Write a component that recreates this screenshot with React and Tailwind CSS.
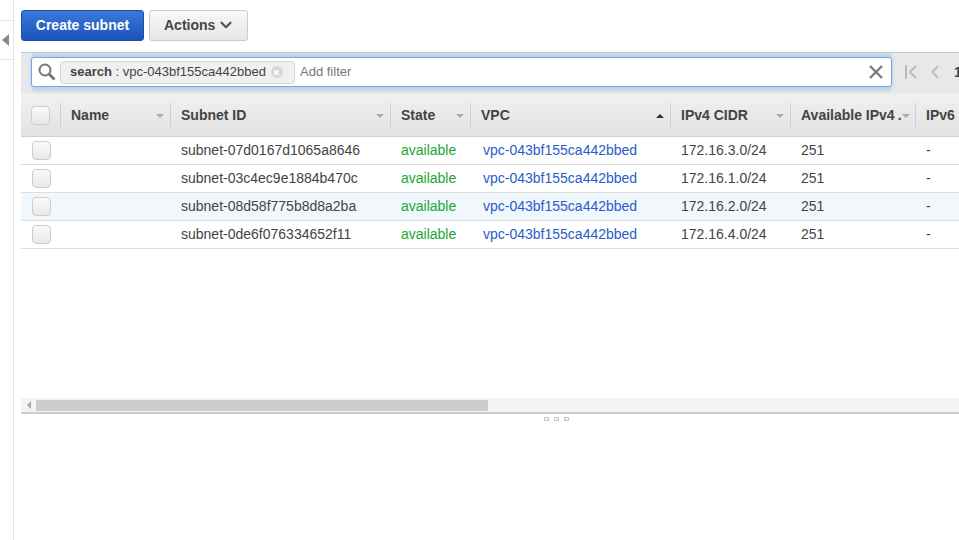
import { ChevronDown } from 'lucide-react';

const rows = [
  { id: 'subnet-07d0167d1065a8646', cidr: '172.16.3.0/24' },
  { id: 'subnet-03c4ec9e1884b470c', cidr: '172.16.1.0/24' },
  { id: 'subnet-08d58f775b8d8a2ba', cidr: '172.16.2.0/24', hover: true },
  { id: 'subnet-0de6f076334652f11', cidr: '172.16.4.0/24' },
];

function Arrow({ up }) {
  if (up) {
    return <span className="w-0 h-0 border-x-[4px] border-x-transparent border-b-[4px] border-b-[#333]" />;
  }
  return <span className="w-0 h-0 border-x-[4px] border-x-transparent border-t-[4px] border-t-[#aaa]" />;
}

function HeaderCell({ label, width, up, noArrow, dots }) {
  return (
    <div className={`${width} shrink-0 h-[26px] flex items-center justify-between pl-[10px] pr-[6px] border-l border-[#d0d0d0] overflow-hidden`}>
      <span className="font-bold text-[14px] text-[#444] whitespace-nowrap">
        {label}
        {dots && <span className="ml-[3px]">.</span>}
      </span>
      {!noArrow && <Arrow up={up} />}
    </div>
  );
}

function Checkbox() {
  return <div className="w-[19px] h-[19px] rounded-[4px] border border-[#ccc] bg-gradient-to-b from-[#fafafa] to-[#e8e8e8]" />;
}

function GripDot() {
  return <span className="w-[5px] h-[4px] border border-[#c4c4c4] bg-[#f6f6f6]" />;
}

export default function App() {
  return (
    <div className="w-[959px] h-[540px] overflow-hidden bg-white flex font-['Liberation_Sans',Arial,sans-serif]">
      {/* Collapsed side nav */}
      <div className="w-[14px] shrink-0 h-full border-r border-[#e6e6e6] pt-[20px]">
        <div className="h-[40px] border-y border-[#e6e6e6] flex items-center">
          <span className="w-0 h-0 border-y-[6px] border-y-transparent border-r-[7px] border-r-[#888] ml-[2px]" />
        </div>
      </div>

      <div className="flex-1 min-w-0 pl-[7px] flex flex-col">
        {/* Buttons */}
        <div className="h-[52px] pt-[10px] flex items-start gap-[5px]">
          <button className="w-[123px] h-[31px] rounded-[3px] border border-[#1a4fa8] bg-gradient-to-b from-[#3b78dc] to-[#1d52b8] text-white font-bold text-[14px]">
            Create subnet
          </button>
          <button className="w-[99px] h-[31px] rounded-[3px] border border-[#ccc] bg-gradient-to-b from-[#f8f8f8] to-[#e6e6e6] text-[#444] font-bold text-[14px] flex items-center pl-[14px] gap-[2px]">
            Actions
            <ChevronDown size={18} strokeWidth={3} className="text-[#555] -mt-[1px]" />
          </button>
        </div>

        {/* Filter bar */}
        <div className="h-[42px] shrink-0 w-[938px] overflow-hidden border-t border-[#c0c8d0] bg-[#e8e8e8] flex items-start pl-[10px] pt-[4px]">
          <div className="w-[861px] h-[30px] shrink-0 bg-white rounded-[3px] border border-[#6fa9ea] shadow-[0_-5px_3px_-1px_#c3d2e4,0_5px_3px_-1px_#c3d2e4,0_0_3px_#9cc4ee] flex items-center">
            <svg width="18" height="18" viewBox="0 0 18 18" fill="none" className="ml-[6px] shrink-0 text-[#777]">
              <circle cx="7" cy="7" r="5.5" stroke="currentColor" strokeWidth="2" />
              <path d="M11 11l5.5 5.5" stroke="currentColor" strokeWidth="3" />
            </svg>
            <div className="ml-[4px] w-[235px] h-[23px] rounded-[4px] border border-[#d5d5d5] bg-[#f0f0f0] flex items-center pl-[9px] gap-[5px] text-[13px] text-[#444] whitespace-nowrap">
              <span><span className="font-bold">search</span> : vpc-043bf155ca442bbed</span>
              <span className="w-[12px] h-[12px] rounded-full bg-[#d6d6d6] flex items-center justify-center">
                <svg width="7" height="7" viewBox="0 0 7 7" fill="none">
                  <path d="M1 1l5 5M6 1l-5 5" stroke="white" strokeWidth="1.5" />
                </svg>
              </span>
            </div>
            <span className="ml-[5px] text-[13px] text-[#777]">Add filter</span>
            <svg width="14" height="14" viewBox="0 0 14 14" fill="none" className="ml-auto mr-[8px] text-[#777]">
              <path d="M1 1l12 12M13 1L1 13" stroke="currentColor" strokeWidth="2.2" />
            </svg>
          </div>
          {/* Pagination */}
          <div className="h-[30px] flex items-center">
            <svg width="12" height="14" viewBox="0 0 12 14" fill="none" className="ml-[13px] shrink-0 text-[#bbb]">
              <path d="M1 0v14M11 1L5 7l6 6" stroke="currentColor" strokeWidth="2" />
            </svg>
            <svg width="8" height="14" viewBox="0 0 8 14" fill="none" className="ml-[14px] shrink-0 text-[#bbb]">
              <path d="M7 1L1.5 7 7 13" stroke="currentColor" strokeWidth="2" />
            </svg>
            <span className="ml-[15px] font-bold text-[14px] text-[#444]">1</span>
          </div>
        </div>

        {/* Table header */}
        <div className="h-[43px] shrink-0 w-[938px] overflow-hidden border-y border-[#cfcfcf] border-t-[#f2f2f2] bg-gradient-to-b from-[#f0f0f0] to-[#e2e2e2] flex items-center">
          <div className="w-[39px] shrink-0 flex justify-center">
            <Checkbox />
          </div>
          <HeaderCell label="Name" width="w-[110px]" />
          <HeaderCell label="Subnet ID" width="w-[220px]" />
          <HeaderCell label="State" width="w-[80px]" />
          <HeaderCell label="VPC" width="w-[200px]" up />
          <HeaderCell label="IPv4 CIDR" width="w-[120px]" />
          <HeaderCell label="Available IPv4" width="w-[125px]" dots />
          <HeaderCell label="IPv6" width="w-[60px]" noArrow />
        </div>

        {/* Rows */}
        <div className="h-[261px] shrink-0 w-[938px] overflow-hidden">
          {rows.map((r) => (
            <div
              key={r.id}
              className={`h-[28px] flex items-center border-b border-[#ddd] text-[14px] whitespace-nowrap ${r.hover ? 'bg-[#f0f7fd]' : 'bg-white'}`}
            >
              <div className="w-[40px] shrink-0 flex justify-center">
                <Checkbox />
              </div>
              <div className="w-[110px] shrink-0" />
              <div className="w-[220px] shrink-0 pl-[10px] text-[#444]">{r.id}</div>
              <div className="w-[80px] shrink-0 pl-[10px] text-[#19a831]">available</div>
              <div className="w-[200px] shrink-0 pl-[12px] text-[#2a5bc8]">vpc-043bf155ca442bbed</div>
              <div className="w-[120px] shrink-0 pl-[10px] text-[#444]">{r.cidr}</div>
              <div className="w-[125px] shrink-0 pl-[10px] text-[#444]">251</div>
              <div className="w-[60px] shrink-0 pl-[10px] text-[#444]">-</div>
            </div>
          ))}
        </div>

        {/* Horizontal scrollbar */}
        <div className="h-[16px] shrink-0 w-[938px] bg-[#f3f3f3] border-b-2 border-[#ccc] flex items-center">
          <div className="w-[15px] shrink-0 flex justify-center">
            <span className="w-0 h-0 border-y-[4px] border-y-transparent border-r-[4px] border-r-[#aaa]" />
          </div>
          <div className="w-[452px] h-[11px] bg-[#cdcdcd]" />
        </div>

        {/* Resize handle */}
        <div className="w-[938px] flex gap-[5px] pt-[3px] pl-[523px]">
          <GripDot />
          <GripDot />
          <GripDot />
        </div>
      </div>
    </div>
  );
}
